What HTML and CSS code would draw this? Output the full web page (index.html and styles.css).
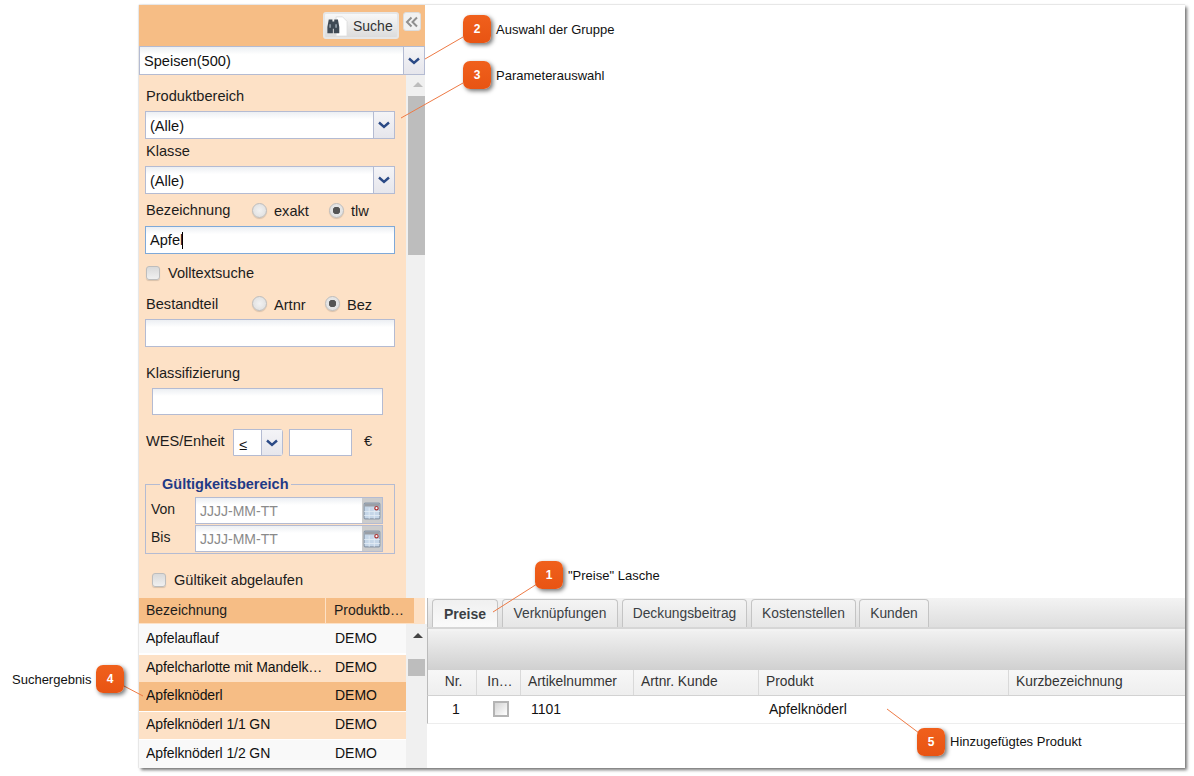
FILE: index.html
```html
<!DOCTYPE html>
<html lang="de">
<head>
<meta charset="utf-8">
<title>Artikelsuche</title>
<link rel="stylesheet" href="styles.css">
</head>
<body>
<div class="stage">
  <div class="window">
    <aside class="left">
      <div class="search-head">
        <button class="btn-search">
          <svg class="ico-search" viewBox="0 0 24 24" width="22" height="22">
            <path d="M11 2h7l5 5v16H11z" fill="#fff" stroke="#ddd"/>
            <path d="M3 5h4v2h2V5h4l1.500 8v7H8.500v-5h-1v5H1.500v-7z" fill="#3f4a55"/>
            <path d="M3.500 10h2v4h-2zM10 10h2v4h-2z" fill="#8b96a1"/>
          </svg>
          <span>Suche</span>
        </button>
        <button class="btn-collapse">
          <svg viewBox="0 0 14 12" width="14" height="12"><path d="M6.500 1.500 2 6l4.500 4.500M12 1.500 7.500 6l4.500 4.500" fill="none" stroke="#8f8f8f" stroke-width="2"/></svg>
        </button>
      </div>
      <div class="combo combo-group">
        <div class="combo-text">Speisen(500)</div>
        <div class="combo-arrow"><svg viewBox="0 0 12 8" width="12" height="8"><path d="M1 1.500 6 6l5-4.500" fill="none" stroke="#2b4a86" stroke-width="2.400"/></svg></div>
      </div>
      <div class="filter-area">
        <form class="filters">
          <div class="label lbl-prod">Produktbereich</div>
          <div class="combo combo-field">
            <div class="combo-text">(Alle)</div>
            <div class="combo-arrow"><svg viewBox="0 0 12 8" width="12" height="8"><path d="M1 1.500 6 6l5-4.500" fill="none" stroke="#2b4a86" stroke-width="2.400"/></svg></div>
          </div>
          <div class="label lbl-class">Klasse</div>
          <div class="combo combo-field">
            <div class="combo-text">(Alle)</div>
            <div class="combo-arrow"><svg viewBox="0 0 12 8" width="12" height="8"><path d="M1 1.500 6 6l5-4.500" fill="none" stroke="#2b4a86" stroke-width="2.400"/></svg></div>
          </div>
          <div class="radio-row rr-name">
            <span class="label rr-label">Bezeichnung</span>
            <span class="radio"></span><span class="rr-text rr-exakt">exakt</span>
            <span class="radio on"></span><span class="rr-text">tlw</span>
          </div>
          <div class="input input-focus">Apfel<span class="caret"></span></div>
          <div class="check-row cr-full"><span class="check"></span><span>Volltextsuche</span></div>
          <div class="radio-row rr-part">
            <span class="label rr-label">Bestandteil</span>
            <span class="radio"></span><span class="rr-text rr-artnr">Artnr</span>
            <span class="radio on"></span><span class="rr-text">Bez</span>
          </div>
          <div class="input"></div>
          <div class="label lbl-klass">Klassifizierung</div>
          <div class="input input-klass"></div>
          <div class="wes-row">
            <span class="label wes-label">WES/Enheit</span>
            <div class="combo combo-op">
              <div class="combo-text">≤</div>
              <div class="combo-arrow"><svg viewBox="0 0 12 8" width="12" height="8"><path d="M1 1.500 6 6l5-4.500" fill="none" stroke="#2b4a86" stroke-width="2.400"/></svg></div>
            </div>
            <div class="input input-wes"></div>
            <span class="euro">€</span>
          </div>
          <fieldset class="validity">
            <legend>Gültigkeitsbereich</legend>
            <div class="date-row">
              <span class="date-label">Von</span>
              <div class="date-input"><span class="date-text">JJJJ-MM-TT</span>
                <span class="date-btn"><svg viewBox="0 0 16 16" width="18" height="18"><rect x="1" y="1" width="14" height="14" rx="1" fill="#c5d6e8" stroke="#8a98a8"/><rect x="1.500" y="1.500" width="13" height="2.500" fill="#9a9fa6"/><path d="M5.500 5v10M10 5v10M1 8.500h14M1 12h14" stroke="#e6eef6" stroke-width=".7"/><circle cx="12" cy="5.500" r="1.500" fill="#fff" stroke="#a33" stroke-width="1.100"/></svg></span>
              </div>
            </div>
            <div class="date-row">
              <span class="date-label">Bis</span>
              <div class="date-input"><span class="date-text">JJJJ-MM-TT</span>
                <span class="date-btn"><svg viewBox="0 0 16 16" width="18" height="18"><rect x="1" y="1" width="14" height="14" rx="1" fill="#c5d6e8" stroke="#8a98a8"/><rect x="1.500" y="1.500" width="13" height="2.500" fill="#9a9fa6"/><path d="M5.500 5v10M10 5v10M1 8.500h14M1 12h14" stroke="#e6eef6" stroke-width=".7"/><circle cx="12" cy="5.500" r="1.500" fill="#fff" stroke="#a33" stroke-width="1.100"/></svg></span>
              </div>
            </div>
          </fieldset>
          <div class="check-row cr-expired"><span class="check"></span><span>Gültikeit abgelaufen</span></div>
        </form>
        <div class="vscroll vscroll-filter">
          <span class="up"></span><span class="thumb thumb-filter"></span>
        </div>
      </div>
      <div class="results">
        <div class="results-head">
          <div class="rh-name">Bezeichnung</div>
          <div class="rh-area">Produktb…</div>
        </div>
        <div class="results-body">
          <div class="result-list">
            <div class="result r-plain r1"><span class="r-name">Apfelauflauf</span><span>DEMO</span></div>
            <div class="result r-peach r2"><span class="r-name">Apfelcharlotte mit Mandelk…</span><span>DEMO</span></div>
            <div class="result r-sel r3"><span class="r-name">Apfelknöderl</span><span>DEMO</span></div>
            <div class="result r-peach r4"><span class="r-name">Apfelknöderl 1/1 GN</span><span>DEMO</span></div>
            <div class="result r-plain r5"><span class="r-name">Apfelknöderl 1/2 GN</span><span>DEMO</span></div>
          </div>
          <div class="vscroll vscroll-result">
            <span class="up up-dark"></span><span class="thumb thumb-result"></span>
          </div>
        </div>
      </div>
    </aside>
    <main class="right">
      <div class="canvas"></div>
      <div class="tabs">
        <div class="tab tab-on">Preise</div>
        <div class="tab t-link">Verknüpfungen</div>
        <div class="tab t-margin">Deckungsbeitrag</div>
        <div class="tab t-cost">Kostenstellen</div>
        <div class="tab t-cust">Kunden</div>
      </div>
      <div class="tabs-rule"></div>
      <div class="toolbar"></div>
      <div class="grid-row grid-head">
        <div class="gh ctr">Nr.</div>
        <div class="gh ctr">In…</div>
        <div class="gh">Artikelnummer</div>
        <div class="gh">Artnr. Kunde</div>
        <div class="gh">Produkt</div>
        <div class="gh">Kurzbezeichnung</div>
      </div>
      <div class="grid-row grid-data">
        <div class="gd ctr gd-nr">1</div>
        <div class="gd ctr gd-in"><span class="grid-check"></span></div>
        <div class="gd gd-num">1101</div>
        <div class="gd"></div>
        <div class="gd gd-prod">Apfelknöderl</div>
        <div class="gd"></div>
      </div>
    </main>
  </div>

  <svg class="leaders" width="1194" height="776" viewBox="0 0 1194 776">
    <path d="M463 37 425 59M463 83 401 118M537 584 493 612M124 686 143 696M887 709 919 733" stroke="#ee7a45" stroke-width="1" fill="none"/>
  </svg>
  <div class="badge b1">1</div><div class="note n1">"Preise" Lasche</div>
  <div class="badge b2">2</div><div class="note n2">Auswahl der Gruppe</div>
  <div class="badge b3">3</div><div class="note n3">Parameterauswahl</div>
  <div class="badge b4">4</div><div class="note n4">Suchergebnis</div>
  <div class="badge b5">5</div><div class="note n5">Hinzugefügtes Produkt</div>
</div>
</body>
</html>
```

FILE: styles.css
```css
* { box-sizing: border-box; }
html, body { margin: 0; height: 100%; background: #fff; overflow: hidden; }
body { font: 14px/16px "Liberation Sans", Arial, sans-serif; color: #1c1c1c; }

.stage { position: relative; width: 1194px; height: 776px; padding: 5px 0 0 139px; }
.window {
  display: flex; width: 1046px; height: 763px; background: #fff;
  box-shadow: 2px 2px 3px rgba(0, 0, 0, .55), 0 -1px 1px rgba(0, 0, 0, .06), -1px 0 1px rgba(0, 0, 0, .06);
}

/* left column */
.left { width: 286px; flex: none; display: flex; flex-direction: column; }
.search-head {
  height: 41px; background: #f6bd85; display: flex; justify-content: flex-end;
  align-items: flex-start; padding: 7px 4px 0 0; gap: 4px;
}
.btn-search {
  width: 76px; height: 27px; padding: 0 0 0 1px; display: flex; align-items: center; gap: 5px;
  border: 2px solid #e6e6e6; border-radius: 3px; background: linear-gradient(#f8f8f8, #dcdcdc);
  font: 14px "Liberation Sans", Arial, sans-serif; color: #333;
}
.ico-search { width: 22px; height: 22px; flex: none; }
.btn-collapse {
  width: 18px; height: 19px; padding: 0; border: 1px solid #ddd; border-radius: 3px;
  background: #f1f1f1; display: flex; align-items: center; justify-content: center;
}

.combo { display: flex; border: 1px solid #b4bbd2; background: #fff; font-size: 14.600px; }
.combo-text {
  flex: 1; min-width: 0; padding: 1px 0 0 4px; display: flex; align-items: center;
  background: linear-gradient(#eceff3, #fff 28%); color: #111;
}
.combo-arrow {
  flex: none; width: 21px; display: flex; align-items: center; justify-content: center;
  background: linear-gradient(#f4f4f7, #e6e6ec); border-left: 1px solid #b4bbd2;
}
.combo-group { height: 29px; flex: none; }

.filter-area { height: 523px; flex: none; display: flex; background: #fde1c6; }
.filters { width: 267px; flex: none; padding-left: 6px; font-size: 14.600px; }
.label { display: block; color: #1c1c1c; padding-left: 1px; }
.lbl-prod { margin-top: 13px; height: 23px; }
.combo-field { width: 250px; height: 28px; }
.lbl-class { height: 27px; padding-top: 4px; }

.radio-row { display: flex; align-items: center; height: 32px; }
.rr-label { width: 107px; }
.radio {
  width: 15px; height: 15px; border-radius: 50%; flex: none; margin-right: 7px;
  border: 1px solid #bdbdbd; background: radial-gradient(#f2f2f2, #dcdcdc);
  box-shadow: 0 1px 1px rgba(0, 0, 0, .15);
}
.radio.on { background: radial-gradient(#555 0 3.500px, #e4e4e4 4px); }
.rr-text { padding-top: 2px; }
.rr-exakt { width: 37px; margin-right: 18px; }
.rr-artnr { width: 37px; margin-right: 14px; }

.input {
  width: 250px; height: 28px; border: 1px solid #b4bbd2; padding-left: 4px;
  background: linear-gradient(#eceff3, #fff 28%); display: flex; align-items: center; color: #111;
}
.input-focus { border-color: #7fa9d8; }
.caret { width: 0; height: 17px; margin-left: -1px; border-left: 1px solid #000; }
.check-row { display: flex; align-items: center; }
.check {
  width: 14px; height: 14px; flex: none; margin-left: 1px; border: 1px solid #bdbdbd; border-radius: 3px;
  background: linear-gradient(#d9d9d9, #f0f0f0); box-shadow: 0 1px 1px rgba(0, 0, 0, .15);
}
.cr-full { height: 37px; gap: 8px; }
.rr-part { height: 28px; padding-bottom: 3px; }
.lbl-klass { margin-top: 18px; height: 23px; }
.input-klass { width: 231px; height: 27px; margin-left: 7px; }

.wes-row { display: flex; align-items: center; height: 27px; margin-top: 14px; }
.wes-label { width: 88px; padding-bottom: 3px; }
.combo-op { width: 50px; height: 27px; border-radius: 0 3px 3px 0; }
.combo-op .combo-text { background: #fff; padding: 5px 0 0 5px; }
.input-wes { width: 63px; height: 27px; margin-left: 6px; background: #fff; }
.euro { margin-left: 12px; padding-bottom: 3px; }

.validity {
  width: 250px; height: 78px; margin: 20px 0 0; padding: 5px 11px 0 5px; border: 1px solid #b4bbd2;
}
.validity legend {
  padding: 0 2px; margin-left: 9px; font-size: 14.500px; font-weight: 700; color: #1f3a86; line-height: 16px;
}
.date-row { display: flex; align-items: center; height: 27px; }
.date-row + .date-row { margin-top: 1px; }
.date-label { width: 44px; padding-bottom: 4px; font-size: 14px; }
.date-input {
  width: 188px; height: 100%; border: 1px solid #b4bbd2; display: flex; align-items: center;
  background: linear-gradient(#eceff3, #fff 28%); padding-left: 4px;
}
.date-text { flex: 1; color: #8a8a8a; font-size: 14px; }
.date-btn {
  width: 20px; height: 100%; flex: none; background: #ccc; display: flex;
  align-items: center; justify-content: center;
}
.cr-expired { height: 18px; margin-top: 17px; padding-left: 6px; gap: 8px; }

.vscroll { position: relative; flex: none; background: #f0f0f0; }
.vscroll-filter { width: 19px; }
.up {
  position: absolute; left: 7px; top: 7px; width: 0; height: 0;
  border: 5px solid transparent; border-top: 0; border-bottom: 5px solid #bdbdbd;
}
.up-dark { border-bottom-color: #444; top: 9px; }
.thumb { position: absolute; left: 2px; width: 17px; background: #bdbdbd; }
.thumb-filter { top: 21px; height: 159px; }

.results { height: 170px; flex: none; }
.results-head { display: flex; height: 26px; background: #fde1c6; }
.rh-name, .rh-area {
  background: #f6bd85; padding: 0 0 2px 7px; display: flex; align-items: center; height: 25px;
}
.rh-name { width: 187px; border-right: 1px solid #fde1c6; }
.rh-area { width: 88px; padding-left: 8px; white-space: nowrap; }
.results-body { display: flex; height: 144px; }
.result-list { width: 267px; flex: none; }
.result { display: flex; align-items: center; padding-left: 7px; color: #111; border-bottom: 1px solid #fff; }
.r-name { width: 189px; white-space: nowrap; overflow: hidden; flex: none; letter-spacing: -.1px; }
.r-plain { background: #f9f9f9; }
.r-peach { background: #fde1c6; }
.r-sel { background: #f6bd85; }
.r1 { height: 31px; border-bottom-width: 2px; padding-bottom: 2px; }
.r2 { height: 27px; border-bottom: 0; padding-bottom: 3px; }
.r3 { height: 30px; padding-bottom: 3px; }
.r4 { height: 28px; padding-bottom: 3px; }
.r5 { height: 28px; border-bottom: 0; padding-bottom: 2px; }
.vscroll-result { width: 21px; height: 144px; }
.thumb-result { top: 35px; height: 17px; }

/* right column */
.right { flex: 1; min-width: 0; display: flex; flex-direction: column; margin-left: 2px; }
.canvas { height: 593px; flex: none; }
.tabs {
  height: 29px; flex: none; display: flex; gap: 4px; padding: 1px 0 0 4px;
  background: linear-gradient(#f3f3f3, #dedede); border-left: 1px solid #bbb; font-size: 13.800px;
}
.tab {
  height: 28px; display: flex; align-items: center; justify-content: center; color: #3b3f44;
  border: 1px solid #c4c4c4; border-bottom: 0; border-radius: 4px 4px 0 0;
  background: linear-gradient(#f4f4f4, #e6e6e6);
}
.tab-on { width: 66px; font-size: 14px; font-weight: 700; background: linear-gradient(#f0f0f0, #fafafa); }
.t-link { width: 116px; }
.t-margin { width: 125px; }
.t-cost { width: 105px; margin-right: -1px; }
.t-cust { width: 70px; }
.tabs-rule { height: 4px; flex: none; background: #f3f3f3; border-top: 2px solid #d6d6d6; border-left: 1px solid #bbb; }
.toolbar {
  height: 39px; flex: none; background: linear-gradient(#f1f1f1, #d0d0d0); border-left: 1px solid #bbb;
}
.grid-row {
  display: grid; grid-template-columns: 49px 44px 113px 125px 250px 1fr; border-left: 1px solid #bbb;
}
.grid-head { height: 26px; background: linear-gradient(#f7f7f7, #eeeeee); border-bottom: 1px solid #d2d2d2; font-size: 13.800px; }
.gh { display: flex; align-items: center; padding: 0 0 1px 7px; border-right: 1px solid #d9d9d9; color: #333; }
.gh:last-child { border-right: 0; }
.gh.ctr { justify-content: center; padding-left: 3px; }
.grid-data { height: 28px; border-bottom: 1px solid #ededed; }
.gd { display: flex; align-items: center; padding: 0 0 2px 10px; color: #111; }
.gd.ctr { justify-content: center; }
.gd.gd-nr { padding-left: 7px; }
.gd.gd-in { padding-left: 4px; }
.gd-prod { padding-left: 10px; }
.grid-check {
  width: 16px; height: 16px; border: 2px solid #b4b4b4; background: linear-gradient(135deg, #d4d4d4, #fff);
}

/* numbered callouts laid over the application */
.leaders { position: absolute; left: 0; top: 0; pointer-events: none; }
.badge {
  position: absolute; width: 28px; height: 28px; border-radius: 7px;
  background: linear-gradient(#f0601c, #e85413); color: #fff; font-size: 12px; font-weight: 700;
  line-height: 28px; text-align: center; box-shadow: 2px 2px 4px rgba(0, 0, 0, .55);
}
.b1 { left: 535px; top: 561px; }
.b2 { left: 463px; top: 15px; }
.b3 { left: 463px; top: 61px; }
.b4 { left: 96px; top: 665px; }
.b5 { left: 917px; top: 728px; }
.note { position: absolute; font-size: 13px; line-height: 14px; color: #111; white-space: nowrap; }
.n1 { left: 568px; top: 569px; }
.n2 { left: 496px; top: 23px; }
.n3 { left: 496px; top: 69px; }
.n4 { left: 12px; top: 673px; }
.n5 { left: 950px; top: 735px; }
```
